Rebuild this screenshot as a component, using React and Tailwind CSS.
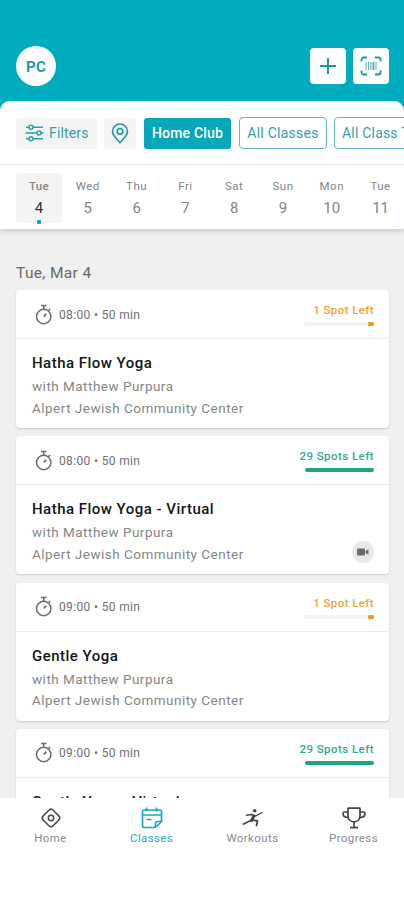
import React from "react";

const days = [
  ["Tue", "4"],
  ["Wed", "5"],
  ["Thu", "6"],
  ["Fri", "7"],
  ["Sat", "8"],
  ["Sun", "9"],
  ["Mon", "10"],
  ["Tue", "11"],
];

const classes = [
  { time: "08:00", title: "Hatha Flow Yoga", spots: 1 },
  { time: "08:00", title: "Hatha Flow Yoga - Virtual", spots: 29, virtual: true },
  { time: "09:00", title: "Gentle Yoga", spots: 1 },
  { time: "09:00", title: "Gentle Yoga - Virtual", spots: 29, virtual: true },
];

function FilterIcon() {
  return (
    <svg width="19" height="18" viewBox="0 0 19 18" fill="none" stroke="#2b9da8" strokeWidth="1.4">
      <path d="M1 3.200h3M8 3.200h10M0.500 9h11.500M16 9h2.500M1 14.800h3M8 14.800h10" />
      <circle cx="6" cy="3.200" r="2" />
      <circle cx="14" cy="9" r="2" />
      <circle cx="6" cy="14.800" r="2" />
    </svg>
  );
}

function PinIcon() {
  return (
    <svg width="18" height="21" viewBox="0 0 18 21" fill="none" stroke="#1c98a4" strokeWidth="1.600">
      <path d="M9 19.600C6 16.400 1.500 12.600 1.500 8.500a7.500 7.500 0 0 1 15 0C16.500 12.600 12 16.400 9 19.600Z" strokeLinejoin="round" />
      <circle cx="9" cy="8.300" r="2.800" />
    </svg>
  );
}

function ScanIcon() {
  return (
    <svg width="22" height="20" viewBox="0 0 22 20" fill="none" stroke="#2196a3" strokeWidth="1.800">
      <path d="M1.500 5.500V3.500a2 2 0 0 1 2-2H7M15 1.500h3.500a2 2 0 0 1 2 2v2M20.500 14.500v2a2 2 0 0 1-2 2H15M7 18.500H3.500a2 2 0 0 1-2-2v-2" />
      <path d="M6 6v8M8.500 6v8M11 6v8M16 6v8" strokeWidth="1.100" strokeOpacity=".7" />
      <path d="M13.500 6v8" strokeWidth="1.800" strokeOpacity=".8" />
    </svg>
  );
}

function StopwatchIcon() {
  return (
    <svg width="18" height="21" viewBox="0 0 18 21" fill="none" stroke="#6b6b6b" strokeWidth="1.500">
      <circle cx="8.700" cy="12.500" r="7.200" />
      <path d="M6 1.500h5.400M8.700 1.500v3.800M13.600 6.500l1.500-1.600" />
      <path d="M8.800 12.400l2.500-2.500" strokeWidth="1.700" />
    </svg>
  );
}

function HomeIcon() {
  return (
    <svg width="22" height="22" viewBox="0 0 22 22" fill="none" stroke="#4b4b4b" strokeWidth="1.500">
      <rect x="4" y="4" width="14" height="14" rx="3" transform="rotate(45 11 11)" />
      <circle cx="11" cy="11" r="2.700" />
    </svg>
  );
}

function ClassesIcon() {
  return (
    <svg width="22" height="22" viewBox="0 0 22 22" fill="none" stroke="#16a9bb" strokeWidth="1.700" strokeLinejoin="round">
      <path d="M13.500 20.500H3.500a2 2 0 0 1-2-2V5a2 2 0 0 1 2-2h15a2 2 0 0 1 2 2v9.500l-4.500 4.500c-1 1-1.500 1.500-2.500 1.500Z" />
      <path d="M14.500 20v-3.500a2 2 0 0 1 2-2h4M1.500 8h19M5.500 0.500v4M15.500 0.500v4M5.500 12.500h5" />
    </svg>
  );
}

function RunnerIcon() {
  return (
    <svg width="22" height="20" viewBox="0 0 22 20" fill="none" stroke="#454545" strokeLinecap="round" strokeLinejoin="round">
      <circle cx="12.700" cy="2.700" r="1.800" fill="#454545" stroke="none" />
      <path d="M4.500 7.200l5-.7 4 1.500 6.500-3.300" strokeWidth="1.400" />
      <path d="M12 8l-2.500 4.500" strokeWidth="3" />
      <path d="M9.500 12.200L1.500 16M10.500 12l5 1-1 4.500" strokeWidth="1.800" />
    </svg>
  );
}

function TrophyIcon() {
  return (
    <svg width="24" height="22" viewBox="0 0 24 22" fill="none" stroke="#454545" strokeWidth="1.700" strokeLinejoin="round">
      <path d="M6 1.200h12V9c0 3.500-2.500 5.800-6 5.800S6 12.500 6 9V1.200Z" />
      <path d="M6 5H2.500A1.500 1.500 0 0 0 1 6.500C1 9 3 10.500 6.200 10.500M18 5h3.500A1.500 1.500 0 0 1 23 6.500C23 9 21 10.500 17.800 10.500M12 15v5.500M8 20.700h8" />
    </svg>
  );
}

function VideoIcon() {
  return (
    <svg width="12" height="8" viewBox="0 0 12 8" fill="#6b6b6b">
      <rect y="0.500" width="8" height="7" rx="0.700" />
      <path d="M8.500 3.200L11.500 1v6L8.500 4.800Z" />
    </svg>
  );
}

function ClassCard({ item }) {
  const low = item.spots === 1;
  return (
    <article className="h-[138px] shrink-0 rounded-[4px] bg-white shadow-[0_1px_2px_rgba(0,0,0,0.16)]">
      <div className="flex h-[49px] items-center border-b border-[#ececec] pl-[19px] pr-[15px]">
        <StopwatchIcon />
        <span className="ml-[6px] pt-px text-[12px] leading-4 tracking-[0.350px] text-[#6f6f6f]">{item.time} • 50 min</span>
        <div className="ml-auto flex flex-col items-end pt-px">
          <span className={low ? "text-[11.500px] font-medium leading-[15px] tracking-[0.400px] text-[#f0a331]" : "text-[11.500px] font-medium leading-[15px] tracking-[0.450px] text-[#31ab8b]"}>
            {low ? "1 Spot Left" : "29 Spots Left"}
          </span>
          <div className={low ? "mt-1 flex h-1 w-[70px] justify-end rounded-full bg-[#f4f4f4]" : "mt-1 h-1 w-[69px] rounded-full bg-[#1ba784]"}>
            {low && <div className="h-1 w-[6px] rounded-[1.500px] bg-[#ed9c18]" />}
          </div>
        </div>
      </div>
      <div className="flex h-[89px] pl-4 pr-[15px] pt-[14px]">
        <div>
          <h3 className="text-[15px] font-medium leading-[20px] tracking-[0.480px] text-[#161616]">{item.title}</h3>
          <p className="mt-[3px] text-[13.500px] leading-[21.500px] tracking-[0.480px] text-[#858585]">with Matthew Purpura</p>
          <p className="text-[13.500px] leading-[21.500px] tracking-[0.480px] text-[#858585]">Alpert Jewish Community Center</p>
        </div>
        {item.virtual && (
          <div className="mb-[11px] ml-auto flex h-[22px] w-[22px] items-center justify-center self-end rounded-full bg-[#e9e9e9]">
            <VideoIcon />
          </div>
        )}
      </div>
    </article>
  );
}

function NavItem({ label, active, children }) {
  return (
    <div className="flex w-[101px] flex-col items-center">
      <div className="flex h-[22px] items-center">{children}</div>
      <span className={active ? "mt-px text-[11.500px] leading-[16px] tracking-[0.350px] text-[#23adbd]" : "mt-px text-[11.500px] leading-[16px] tracking-[0.400px] text-[#8b8b8b]"}>{label}</span>
    </div>
  );
}

export default function App() {
  return (
    <div className="flex h-[900px] w-[404px] flex-col overflow-hidden bg-[#00adbe] font-['Roboto',sans-serif]">
      <header className="flex h-[101px] shrink-0 items-start pl-4 pr-[15px] pt-[46px]">
        <div className="flex h-10 w-10 items-center justify-center rounded-full bg-white pt-[2px] text-[15px] font-bold tracking-[0.300px] text-[#209ba7]">PC</div>
        <div className="ml-auto mt-[2px] flex gap-[7px]">
          <button className="flex h-9 w-9 items-center justify-center rounded-[4px] bg-white">
            <svg width="16" height="16" viewBox="0 0 16 16" stroke="#1697a4" strokeWidth="2"><path d="M8 0v16M0 8h16" /></svg>
          </button>
          <button className="flex h-9 w-9 items-center justify-center rounded-[4px] bg-white"><ScanIcon /></button>
        </div>
      </header>

      <div className="flex min-h-0 flex-1 flex-col overflow-hidden rounded-t-[10px] bg-[#f0f0f0]">
        <section className="z-10 h-[128px] shrink-0 bg-white shadow-[0_2px_6px_rgba(0,0,0,0.18)]">
          <div className="flex h-[64px] items-center overflow-hidden border-b border-[#ebebeb] pl-4 pt-px text-[14px] text-[#369faa]">
            <div className="flex h-[31px] w-[81px] shrink-0 items-center gap-[5px] rounded-[4px] bg-[#f4f4f4] pl-[9px] tracking-[0.150px]"><FilterIcon /><span className="pt-px">Filters</span></div>
            <div className="ml-[7px] flex h-[31px] w-8 shrink-0 items-center justify-center rounded-[4px] bg-[#f4f4f4]"><PinIcon /></div>
            <div className="ml-2 flex h-[31px] w-[87px] shrink-0 items-center justify-center rounded-[3px] bg-[#04a8b8] pt-px font-medium tracking-[0.200px] text-white">Home Club</div>
            <div className="ml-2 flex h-8 w-[88px] shrink-0 items-center justify-center rounded-[4px] border border-[#62b7bf] pt-px tracking-[0.250px]">All Classes</div>
            <div className="ml-[7px] flex h-8 w-[112px] shrink-0 items-center whitespace-nowrap rounded-[4px] border border-[#62b7bf] pl-[7px] pt-px tracking-[0.200px]">All Class Types</div>
          </div>
          <div className="flex gap-[2.800px] pl-4 pt-2">
            {days.map(([day, date], i) => (
              <div key={date} className={i === 0 ? "flex h-[50px] w-[46px] shrink-0 flex-col items-center rounded-[4px] bg-[#f4f4f4] pt-[6px] text-[#333]" : "flex h-[50px] w-[46px] shrink-0 flex-col items-center pt-[6px] text-[#858585]"}>
                <span className={i === 0 ? "text-[11.500px] font-medium leading-[15px] tracking-[0.300px] text-[#858585]" : "text-[11.500px] leading-[15px] tracking-[0.500px] text-[#858585]"}>{day}</span>
                <span className="mt-[4px] text-[15px] leading-[20px]">{date}</span>
                {i === 0 && <span className="mt-[2px] h-1 w-1 shrink-0 rounded-[1px] bg-[#14a6b4]" />}
              </div>
            ))}
          </div>
        </section>

        <main className="min-h-0 flex-1 overflow-hidden pl-4 pr-[15px] pt-[33px]">
          <h2 className="h-[28px] text-[15.500px] leading-[22px] tracking-[0.350px] text-[#686868]">Tue, Mar 4</h2>
          <div className="flex flex-col gap-[8.300px]">
            {classes.map((item) => <ClassCard key={item.title} item={item} />)}
          </div>
        </main>

        <nav className="z-10 flex h-[102px] shrink-0 bg-white pt-[9px]">
          <NavItem label="Home"><HomeIcon /></NavItem>
          <NavItem label="Classes" active><ClassesIcon /></NavItem>
          <NavItem label="Workouts"><RunnerIcon /></NavItem>
          <NavItem label="Progress"><TrophyIcon /></NavItem>
        </nav>
      </div>
    </div>
  );
}
